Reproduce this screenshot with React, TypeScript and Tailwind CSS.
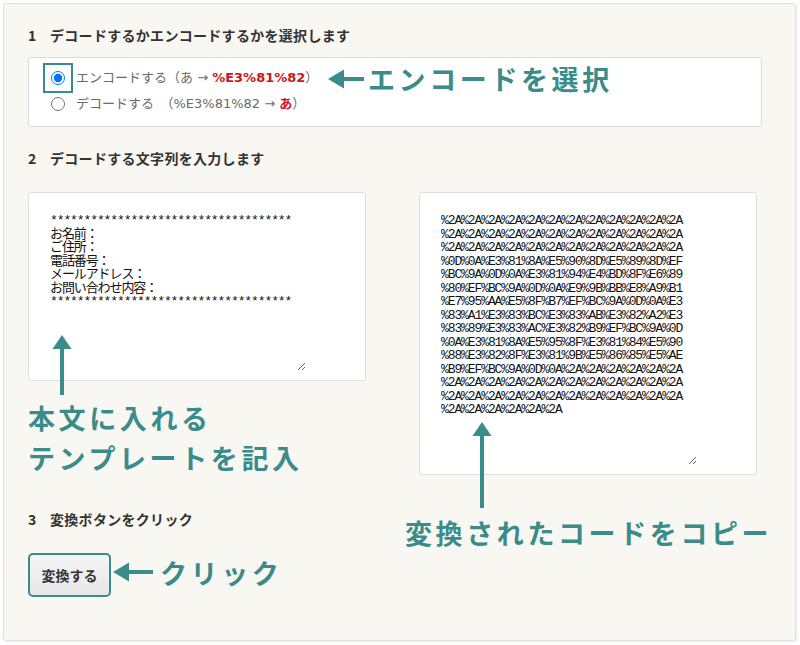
import React from "react";

const teal = "#3a8c8b";

const leftText = [
  "************************************",
  "お名前：",
  "ご住所：",
  "電話番号：",
  "メールアドレス：",
  "お問い合わせ内容：",
  "************************************",
].join("\n");

const rightText = [
  "%2A%2A%2A%2A%2A%2A%2A%2A%2A%2A%2A%2A",
  "%2A%2A%2A%2A%2A%2A%2A%2A%2A%2A%2A%2A",
  "%2A%2A%2A%2A%2A%2A%2A%2A%2A%2A%2A%2A",
  "%0D%0A%E3%81%8A%E5%90%8D%E5%89%8D%EF",
  "%BC%9A%0D%0A%E3%81%94%E4%BD%8F%E6%89",
  "%80%EF%BC%9A%0D%0A%E9%9B%BB%E8%A9%B1",
  "%E7%95%AA%E5%8F%B7%EF%BC%9A%0D%0A%E3",
  "%83%A1%E3%83%BC%E3%83%AB%E3%82%A2%E3",
  "%83%89%E3%83%AC%E3%82%B9%EF%BC%9A%0D",
  "%0A%E3%81%8A%E5%95%8F%E3%81%84%E5%90",
  "%88%E3%82%8F%E3%81%9B%E5%86%85%E5%AE",
  "%B9%EF%BC%9A%0D%0A%2A%2A%2A%2A%2A%2A",
  "%2A%2A%2A%2A%2A%2A%2A%2A%2A%2A%2A%2A",
  "%2A%2A%2A%2A%2A%2A%2A%2A%2A%2A%2A%2A",
  "%2A%2A%2A%2A%2A%2A",
].join("\n");

const monoFont = { fontFamily: '"Liberation Mono", "Noto Sans CJK JP", monospace' };

function Heading({ n, children }: { n: string; children: React.ReactNode }) {
  return (
    <div className="flex h-[20px] items-center text-[14px] font-bold tracking-[0.3px] text-[#333]">
      <span className="w-[22px]">{n}</span>
      <span>{children}</span>
    </div>
  );
}

// teal annotation arrows, drawn over the screenshot
function ArrowLeft({ x, y, len }: { x: number; y: number; len: number }) {
  return (
    <svg
      className="absolute"
      style={{ left: x, top: y - 10 }}
      width={len}
      height={20}
      viewBox={`0 0 ${len} 20`}
    >
      <polygon points="0,10 16,0.5 16,19.5" fill={teal} />
      <rect x={15} y={8} width={len - 15} height={4} fill={teal} />
    </svg>
  );
}

function ArrowUp({ x, y, len }: { x: number; y: number; len: number }) {
  return (
    <svg
      className="absolute"
      style={{ left: x - 10, top: y }}
      width={20}
      height={len}
      viewBox={`0 0 20 ${len}`}
    >
      <polygon points="10,0 0.5,14 19.5,14" fill={teal} />
      <rect x={8} y={13} width={4} height={len - 13} fill={teal} />
    </svg>
  );
}

function Note({ x, y, children }: { x: number; y: number; children: React.ReactNode }) {
  return (
    <div
      className="absolute whitespace-nowrap text-[27px] font-bold leading-[27px] tracking-[3.6px] text-[#3a8c8b]"
      style={{ left: x, top: y }}
    >
      {children}
    </div>
  );
}

export default function App() {
  return (
    <div
      className="relative h-[645px] w-[800px] bg-white p-[3px]"
      style={{ fontFamily: '"Noto Sans CJK JP", "Noto Sans", sans-serif' }}
    >
      <div className="h-[638px] w-[793px] rounded-[3px] border border-[#e2e2dc] bg-[#f8f7f1] pl-[24px] pr-[23px] pt-[21px] shadow-[1px_1px_2px_rgba(0,0,0,0.08)]">
        <Heading n="1">デコードするかエンコードするかを選択します</Heading>

        <div
          className="mt-[12px] h-[70px] w-[734px] rounded-[3px] border border-[#dcdcdc] bg-white pl-[22px] pt-[7px] text-[13px] text-[#6a6a6a]"
          style={{ fontFamily: '"DejaVu Sans", "Noto Sans CJK JP", sans-serif' }}
        >
          <label className="flex h-[26px] items-center">
            <span className="relative flex h-[14px] w-[14px] items-center justify-center">
              <span className="absolute -inset-[8px] border-2 border-[#3a8c8b]" />
              <input type="radio" name="mode" defaultChecked className="m-0 h-[14px] w-[14px]" />
            </span>
            <span className="ml-[11px]">
              エンコードする（あ → <span className="font-bold text-[#d0141a]">%E3%81%82</span>）
            </span>
          </label>
          <label className="flex h-[26px] items-center">
            <span className="flex h-[14px] w-[14px] items-center justify-center">
              <input type="radio" name="mode" className="m-0 h-[14px] w-[14px]" />
            </span>
            <span className="ml-[11px]">
              デコードする　（%E3%81%82 → <span className="font-bold text-[#d0141a]">あ</span>）
            </span>
          </label>
        </div>

        <div className="mt-[21px]">
          <Heading n="2">デコードする文字列を入力します</Heading>
        </div>

        <div className="mt-[24px] grid grid-cols-[338px_338px] items-start gap-x-[53px]">
          <div className="h-[189px] rounded-[3px] border border-[#dedede] bg-white pl-[21px] pt-[21px]">
            <textarea
              readOnly
              defaultValue={leftText}
              className="h-[157px] w-[256px] resize border-0 bg-transparent p-0 text-[13px] leading-[13.5px] tracking-[-1.1px] text-[#111] outline-none"
              style={monoFont}
            />
          </div>
          <div className="h-[283px] rounded-[3px] border border-[#dedede] bg-white pl-[21px] pt-[21px]">
            <textarea
              readOnly
              defaultValue={rightText}
              className="h-[251px] w-[256px] resize border-0 bg-transparent p-0 text-[13px] leading-[13.5px] tracking-[-1.1px] text-[#111] outline-none"
              style={monoFont}
            />
          </div>
        </div>

        <div className="mt-[34px]">
          <Heading n="3">変換ボタンをクリック</Heading>
        </div>

        <button className="mt-[24px] h-[44px] w-[83px] rounded-[5px] border-2 border-[#3a8c8b] bg-gradient-to-b from-[#f4f4f4] to-[#e8e8e8] text-[14px] font-bold text-[#333]">
          変換する
        </button>
      </div>

      <ArrowLeft x={328} y={79} len={36} />
      <Note x={368} y={65}>エンコードを選択</Note>

      <ArrowUp x={62} y={335} len={60} />
      <Note x={28} y={404}>本文に入れる</Note>
      <Note x={28} y={444}>テンプレートを記入</Note>

      <ArrowUp x={482} y={422} len={86} />
      <Note x={405} y={519}>変換されたコードをコピー</Note>

      <ArrowLeft x={113} y={572} len={40} />
      <Note x={160} y={559}>クリック</Note>
    </div>
  );
}
